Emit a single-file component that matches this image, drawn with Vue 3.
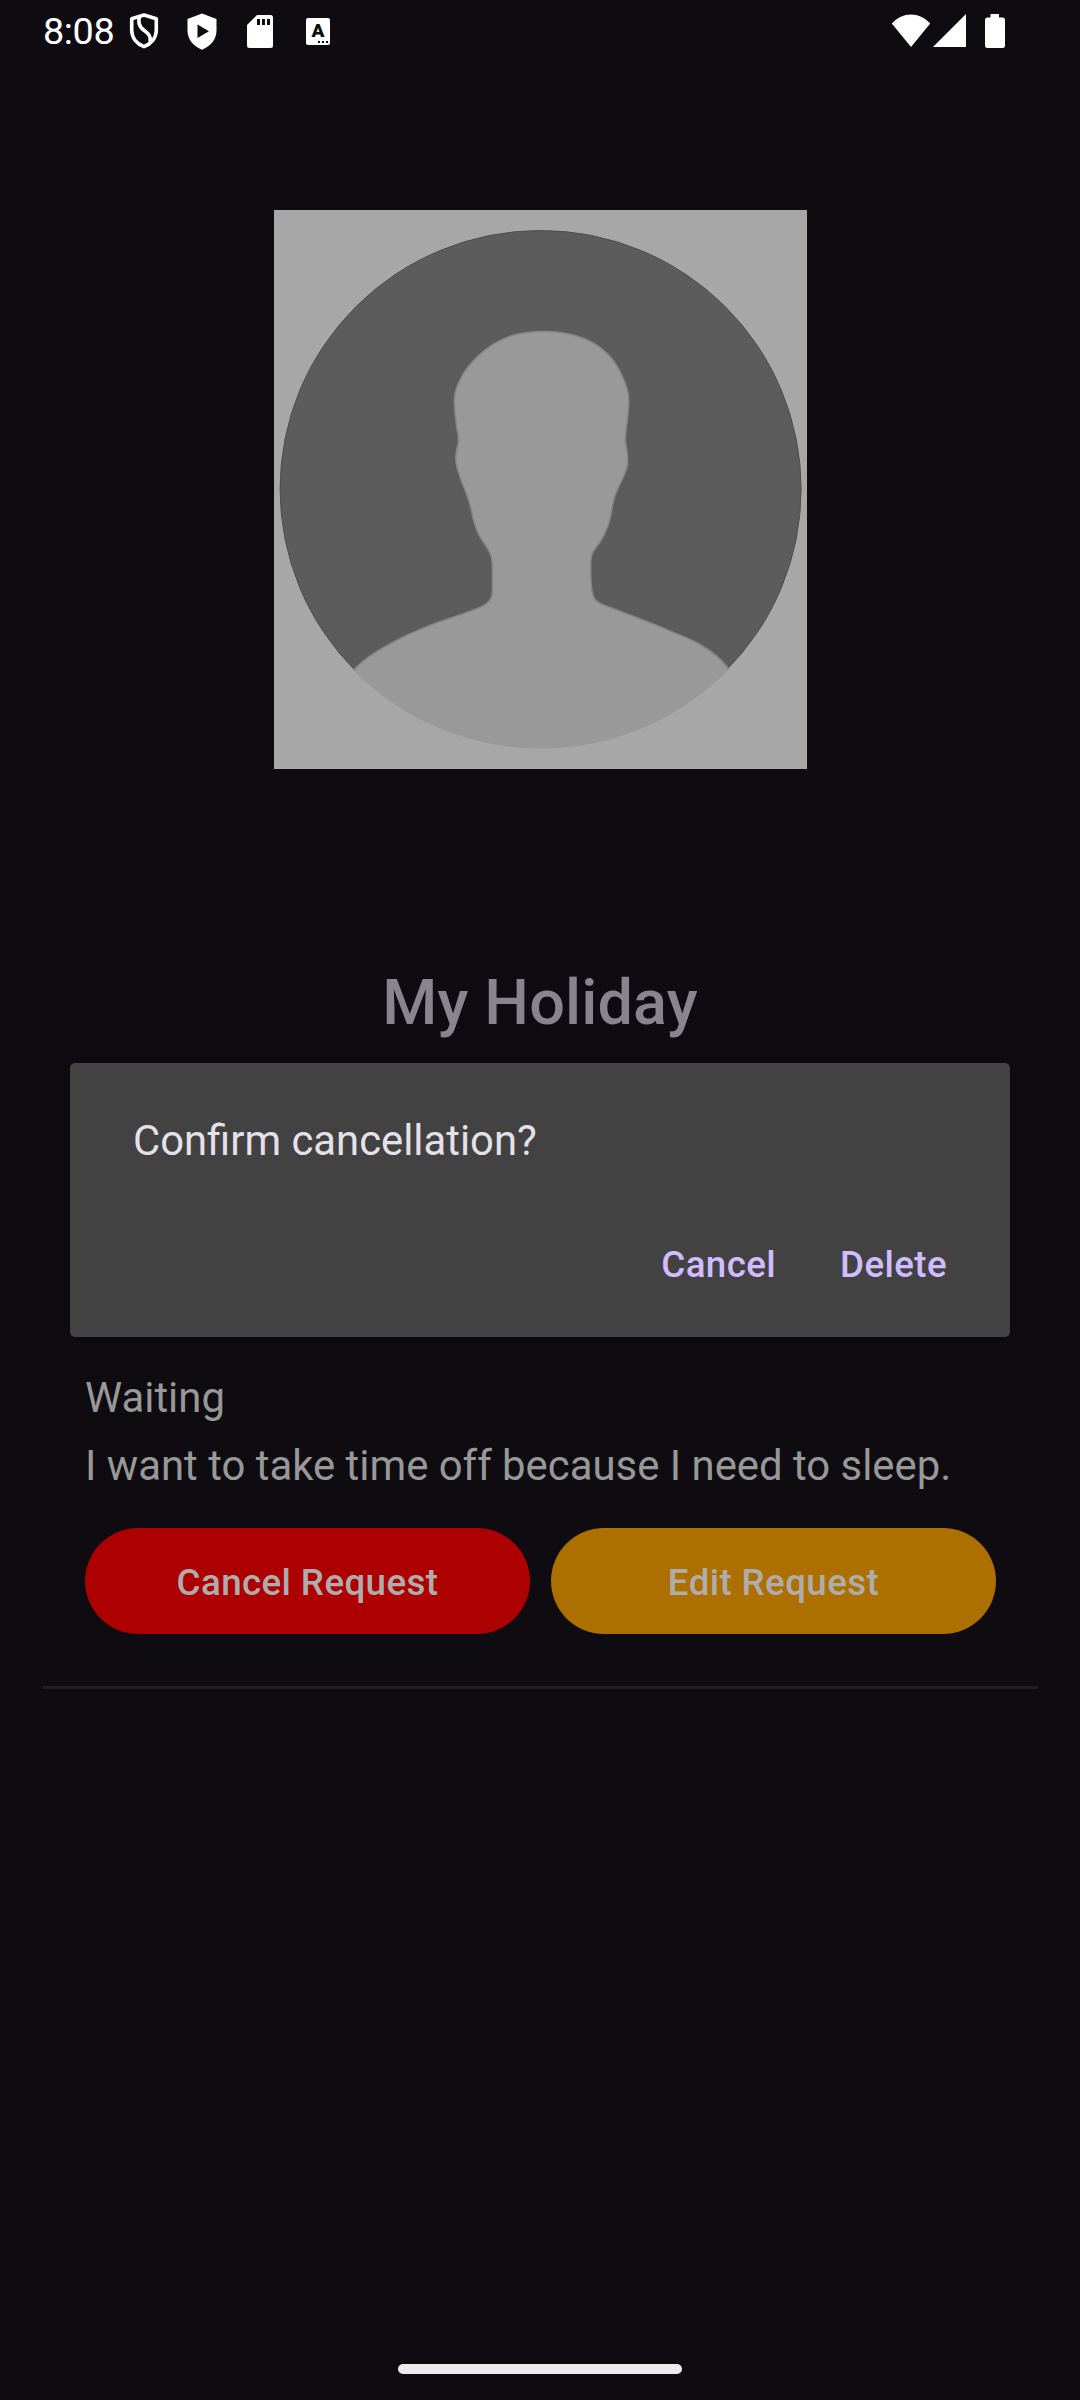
<script setup>
const leave = {
  status: 'Waiting',
  reason: 'I want to take time off because I need to sleep.',
}
</script>

<template>
  <div class="screen">
    <header class="status-bar">
      <span class="clock">8:08</span>
      <svg class="ic shield" width="30" height="36" viewBox="0 0 30 36">
        <path d="M15 2 27.3 5.8V17C27.3 25 22 31 15 33.6 8 31 2.7 25 2.7 17V5.8Z" fill="none" stroke="#fff" stroke-width="3.6" stroke-linejoin="round" />
        <path d="M10.600 3.500C8.600 9.500 9.800 13 14 16.500 19 20.500 22 22 21.200 29" fill="none" stroke="#fff" stroke-width="3.600" />
      </svg>
      <svg class="ic play" width="30" height="37" viewBox="0 0 30 37">
        <path d="M15 .5 29.5 6V17.5C29.5 26.500 23.5 33.5 15 36.700 6.500 33.500 .5 26.500 .5 17.500V6Z" fill="#fff" />
        <path d="M10.500 11.500V25L22 18.200Z" fill="#0e0c10" />
      </svg>
      <svg class="ic sd" width="26" height="33" viewBox="0 0 26 33">
        <path d="M10 0H23.500Q26 0 26 2.500V30.500Q26 33 23.500 33H2.500Q0 33 0 30.500V10Z" fill="#fff" />
        <path d="M10 4h3v6h-3zM15 4h3v6h-3zM20 4h3v6h-3z" fill="#0e0c10" />
      </svg>
      <span class="ic keyboard"><b>A</b><i></i><i></i><i></i></span>
      <svg class="ic wifi" width="40" height="34" viewBox="0 0 40 34">
        <path d="M.8 9.500C12 -2.500 28 -2.500 39.200 9.500L20 33Z" fill="#fff" />
      </svg>
      <svg class="ic signal" width="33" height="33" viewBox="0 0 33 33">
        <path d="M33 0V33H0Z" fill="#fff" />
      </svg>
      <svg class="ic battery" width="20" height="34" viewBox="0 0 20 34">
        <path d="M5.500 0H14V3.500H17.500Q20 3.500 20 6V31.500Q20 34 17.500 34H2.500Q0 34 0 31.500V6Q0 3.500 2.500 3.500H5.500Z" fill="#fff" />
      </svg>
    </header>

    <main class="content">
      <svg class="avatar" width="533" height="559" viewBox="0 0 533 559">
        <defs>
          <clipPath id="disc"><ellipse cx="266.600" cy="279" rx="261.500" ry="259.500" /></clipPath>
        </defs>
        <rect width="533" height="559" fill="#a7a7a7" />
        <ellipse cx="266.600" cy="279" rx="260.500" ry="258.500" fill="#5c5c5c" stroke="#4d4e4a" stroke-width="1" />
        <path
          clip-path="url(#disc)"
          fill="#999"
          stroke="#858585"
          stroke-width="1.500"
          d="M270 121.500C256 121.500 246 123 236.700 126C223 130.500 213 137 203 147C196 154 190 161 187 168C182 177 180 183 180.300 192C180.600 202 181.500 209 182.500 216C183.500 222 184.800 227 184.500 231C184 236 181.500 242 181.700 248C182 260 187 270 191 280C194 287 196 294 197.500 301C199.500 312 202 320 206.700 328C210 334 215 339 217 346C218.300 350 218.300 354 218.300 360V380C218.300 389 215 393 206.700 397C191 404 174 408 156.700 415C145 420 134 424 123.300 430C106 439 92 447 80.700 459L60 559H474L454 458C445 446 434 439 426 434.500C417 429 408 426 399 422.300C388 417 377 413 366 408.700L327 394C321 391 319.500 388 318.500 383C316.500 374 316.700 366 316.700 355C316.700 349 317.500 344 320 340.500C324 335 327 331 329.500 326C333 319 335 314 336.500 307C338.500 298 339 288 342.500 282C346 273 352 264 353.700 254C354 243 352.500 239 351.500 232C351 227 352 221 352.800 214C354 205 355 198 354.800 190C354.500 181 352 174 349 168C345 158 340 150 332.700 143C325 136 317 130.500 306 127C296 123.500 286 121.500 270 121.500Z"
        />
      </svg>

      <h1 class="title">My Holiday</h1>

      <section class="request">
        <p>{{ leave.status }}</p>
        <p>{{ leave.reason }}</p>
        <div class="actions">
          <button class="pill cancel">Cancel Request</button>
          <button class="pill edit">Edit Request</button>
        </div>
      </section>
    </main>

    <div class="dialog" role="dialog">
      <p class="message">Confirm cancellation?</p>
      <div class="choices">
        <button>Cancel</button>
        <button>Delete</button>
      </div>
    </div>

    <div class="home-bar"></div>
  </div>
</template>

<style>
body {
  margin: 0;
  background: #0e0c10;
}
</style>

<style scoped>
.screen {
  position: relative;
  display: flex;
  flex-direction: column;
  box-sizing: border-box;
  width: 1080px;
  height: 2400px;
  overflow: hidden;
  background: #0e0c10;
  font-family: Roboto, "Noto Sans", sans-serif;
}
p,
h1 {
  margin: 0;
}
button {
  margin: 0;
  padding: 0;
  border: 0;
  background: none;
  font: 500 36.75px/43px Roboto, "Noto Sans", sans-serif;
  white-space: nowrap;
}
.status-bar {
  display: flex;
  align-items: flex-start;
  height: 64px;
  padding-left: 43px;
}
.clock {
  width: 86px;
  margin-top: 9px;
  color: #fff;
  font-size: 37.8px;
  line-height: 44px;
  letter-spacing: -0.4px;
  white-space: nowrap;
}
.ic {
  display: block;
  flex: none;
}
.shield {
  margin: 13px 0 0;
}
.play {
  margin: 13px 0 0 28px;
}
.sd {
  margin: 15px 0 0 30px;
}
.keyboard {
  position: relative;
  display: flex;
  align-items: flex-end;
  justify-content: flex-end;
  gap: 2px;
  box-sizing: border-box;
  width: 24px;
  height: 27px;
  margin: 18px 0 0 33px;
  padding: 0 2px 2px 0;
  border-radius: 2px;
  background: #fff;
}
.keyboard b {
  position: absolute;
  top: 3px;
  left: 0;
  width: 24px;
  color: #0e0c10;
  font-size: 19px;
  font-weight: 900;
  line-height: 20px;
  text-align: center;
}
.keyboard i {
  width: 2px;
  height: 2px;
  background: #0e0c10;
}
.wifi {
  margin: 14px 0 0 561px;
}
.signal {
  margin: 14px 0 0 2px;
}
.battery {
  margin: 14px 0 0 19px;
}
.content {
  display: flex;
  flex-direction: column;
  align-items: center;
  padding-top: 146px;
}
.avatar {
  display: block;
  margin-left: 1px;
}
.title {
  margin-top: 197px;
  color: #89858d;
  font-size: 63px;
  font-weight: 500;
  line-height: 74px;
  letter-spacing: 0.15px;
}
.request {
  box-sizing: border-box;
  width: 995px;
  height: 336px;
  margin-top: 313px;
  margin-left: 1px;
  padding: 20px 42px 0;
  border-bottom: 3px solid #202022;
}
.request p {
  color: #989898;
  font-size: 41.86px;
  line-height: 49px;
  white-space: nowrap;
}
.request p + p {
  margin-top: 19px;
}
.actions {
  display: flex;
  gap: 21px;
  margin-top: 38px;
}
.pill {
  width: 445px;
  height: 106px;
  padding-top: 2px;
  border-radius: 53px;
  color: #adadad;
  letter-spacing: 0.38px;
}
.pill.cancel {
  background: #ad0000;
}
.pill.edit {
  background: #ad7000;
}
.dialog {
  position: absolute;
  top: 1063px;
  left: 70px;
  box-sizing: border-box;
  width: 940px;
  height: 274px;
  padding: 53px 63px 0;
  border-radius: 5px;
  background: #424242;
  box-shadow: 0 12px 30px rgba(0, 0, 0, 0.12);
}
.message {
  color: #e6e0e9;
  font-size: 41.8px;
  line-height: 49px;
}
.choices {
  display: flex;
  justify-content: flex-end;
  gap: 64px;
  margin-top: 78px;
}
.choices button {
  color: #d0bcff;
  letter-spacing: 0.38px;
}
.home-bar {
  width: 284px;
  height: 10px;
  margin: auto auto 26px;
  border-radius: 5px;
  background: #ececec;
}
</style>
